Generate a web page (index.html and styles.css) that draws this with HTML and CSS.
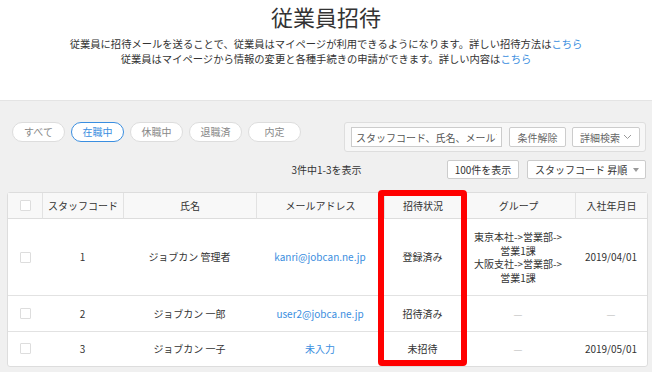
FILE: index.html
```html
<!DOCTYPE html>
<html lang="ja">

<head>
    <meta charset="UTF-8">
    <meta name="viewport" content="width=device-width, initial-scale=1.0">
    <title>従業員招待</title>

    <link rel="stylesheet" href="styles.css">
</head>

<body>
    <header class="page-head">
        <h1 class="page-title">従業員招待</h1>
        <p class="page-desc">
            従業員に招待メールを送ることで、従業員はマイページが利用できるようになります。詳しい招待方法は<a href="#">こちら</a><br>
            従業員はマイページから情報の変更と各種手続きの申請ができます。詳しい内容は<a href="#">こちら</a>
        </p>
    </header>

    <main class="list-area">
        <div class="toolbar">
            <ul class="status-tabs">
                <li><a href="#" class="pill">すべて</a></li>
                <li><a href="#" class="pill active">在職中</a></li>
                <li><a href="#" class="pill">休職中</a></li>
                <li><a href="#" class="pill">退職済</a></li>
                <li><a href="#" class="pill">内定</a></li>
            </ul>

            <div class="search-panel">
                <input type="text" class="search-input" placeholder="スタッフコード、氏名、メールアドレス">
                <button class="btn btn-clear">条件解除</button>
                <button class="btn btn-more">詳細検索
                    <svg width="9" height="6" viewBox="0 0 9 6"><path d="M1 1l3.5 3.5L8 1" fill="none" stroke="#999" stroke-width="1"/></svg>
                </button>
            </div>
        </div>

        <div class="pager-row">
            <span></span>
            <span class="count">3件中1-3を表示</span>
            <div class="pager-controls">
                <button class="btn btn-dark btn-per">100件を表示</button>
                <button class="btn btn-dark btn-sort">スタッフコード 昇順 <span class="caret"></span></button>
            </div>
        </div>

        <div class="table-wrap">
            <table class="staff-table">
                <colgroup>
                    <col style="width:34px">
                    <col style="width:81px">
                    <col style="width:133px">
                    <col style="width:128px">
                    <col style="width:77px">
                    <col style="width:114px">
                    <col style="width:72px">
                </colgroup>
                <thead>
                    <tr>
                        <th><span class="check"></span></th>
                        <th>スタッフコード</th>
                        <th>氏名</th>
                        <th>メールアドレス</th>
                        <th>招待状況</th>
                        <th>グループ</th>
                        <th>入社年月日</th>
                    </tr>
                </thead>
                <tbody>
                    <tr>
                        <td><span class="check"></span></td>
                        <td>1</td>
                        <td>ジョブカン 管理者</td>
                        <td><a href="#">kanri@jobcan.ne.jp</a></td>
                        <td>登録済み</td>
                        <td>東京本社-&gt;営業部-&gt;<br>営業1課<br>大阪支社-&gt;営業部-&gt;<br>営業1課</td>
                        <td>2019/04/01</td>
                    </tr>
                    <tr>
                        <td><span class="check"></span></td>
                        <td>2</td>
                        <td>ジョブカン 一郎</td>
                        <td><a href="#">user2@jobca.ne.jp</a></td>
                        <td>招待済み</td>
                        <td class="empty">—</td>
                        <td class="empty">—</td>
                    </tr>
                    <tr>
                        <td><span class="check"></span></td>
                        <td>3</td>
                        <td>ジョブカン 一子</td>
                        <td><a href="#">未入力</a></td>
                        <td>未招待</td>
                        <td class="empty">—</td>
                        <td>2019/05/01</td>
                    </tr>
                </tbody>
            </table>

            <!-- annotation frame around the invite status column -->
            <div class="highlight"></div>
        </div>
    </main>
</body>

</html>
```

FILE: styles.css
```css
html {
    font-family: "Noto Sans CJK JP", "Noto Sans", sans-serif;
    font-size: 10px;
    color: #333;
}

body {
    margin: 0;
    background: #f0f0f0;
}

a {
    color: #3a8ee0;
    text-decoration: none;
}

.page-head {
    background: #fff;
    height: 100px;
    text-align: center;
    border-bottom: 1px solid #e4e4e4;
}

.page-title {
    margin: 0;
    padding-top: 3px;
    font-size: 22px;
    line-height: 26px;
    font-weight: normal;
    color: #333;
}

.page-desc {
    margin: 8px 0 0;
    font-size: 10.3px;
    line-height: 14.5px;
}

.list-area {
    padding: 21px 6px 0 7px;
}

.toolbar {
    display: flex;
    justify-content: space-between;
    align-items: flex-start;
}

.status-tabs {
    display: flex;
    gap: 6px;
    list-style: none;
    margin: 0;
    padding: 0 0 0 5px;
}

.pill {
    display: block;
    width: 51px;
    height: 18px;
    line-height: 18px;
    text-align: center;
    background: #fff;
    border: 1px solid #ddd;
    border-radius: 10px;
    color: #888;
    font-size: 10px;
}

.pill.active {
    border-color: #3a8ee0;
    color: #3a8ee0;
}

.search-panel {
    display: flex;
    align-items: center;
    gap: 6px;
    height: 20px;
    padding: 4px 5px 4px 6px;
    background: #f7f7f7;
    border: 1px solid #dedede;
    border-radius: 3px;
}

.search-input {
    box-sizing: border-box;
    width: 151px;
    height: 20px;
    margin-right: 1px;
    padding: 0 4px;
    border: 1px solid #ccc;
    font-family: inherit;
    font-size: 10px;
    background: #fff;
}

.search-input::placeholder {
    color: #555;
}

.btn {
    box-sizing: border-box;
    height: 20px;
    padding: 0 4px;
    background: #fff;
    border: 1px solid #ccc;
    border-radius: 2px;
    font-family: inherit;
    font-size: 10px;
    color: #666;
    display: inline-flex;
    align-items: center;
    justify-content: center;
    gap: 3px;
    white-space: nowrap;
}

.btn-clear {
    width: 57px;
}

.btn-more {
    width: 68px;
}

.pager-row {
    display: grid;
    grid-template-columns: 1fr auto 1fr;
    align-items: center;
    margin-top: 8px;
    height: 19px;
}

.count {
    font-size: 10px;
}

.pager-controls {
    display: flex;
    justify-content: flex-end;
    gap: 8px;
}

.btn-dark {
    color: #333;
    height: 19px;
}

.btn-per {
    width: 72px;
}

.btn-sort {
    width: 119px;
    justify-content: space-between;
    padding: 0 6px 0 7px;
}

.caret {
    width: 0;
    height: 0;
    border-left: 3.5px solid transparent;
    border-right: 3.5px solid transparent;
    border-top: 4px solid #999;
}

.table-wrap {
    position: relative;
    margin-top: 13px;
}

.staff-table {
    width: 639px;
    table-layout: fixed;
    border-collapse: separate;
    border-spacing: 0;
    background: #fff;
    border: 1px solid #ddd;
    border-radius: 3px;
    font-size: 10px;
}

.staff-table th {
    background: #f8f8f8;
    font-weight: normal;
    line-height: 13px;
    padding: 6px 2px;
    border-bottom: 1px solid #ddd;
    border-left: 1px solid #e2e2e2;
    white-space: nowrap;
    overflow: hidden;
}

.staff-table th:first-child {
    border-left: none;
}

.staff-table td {
    text-align: center;
    line-height: 13.5px;
    padding: 10.5px 4px;
    border-top: 1px solid #e2e2e2;
}

.staff-table tbody tr:first-child td {
    border-top: none;
    padding: 11px 4px;
}

.staff-table td.empty {
    color: #ccc;
}

.check {
    display: block;
    width: 9px;
    height: 9px;
    margin: 0 auto;
    border: 1px solid #ddd;
    border-radius: 1px;
    background: #fff;
}

.highlight {
    position: absolute;
    left: 371px;
    top: -2px;
    width: 77px;
    height: 164px;
    border: 6px solid #f00;
    border-radius: 4px;
}
```
